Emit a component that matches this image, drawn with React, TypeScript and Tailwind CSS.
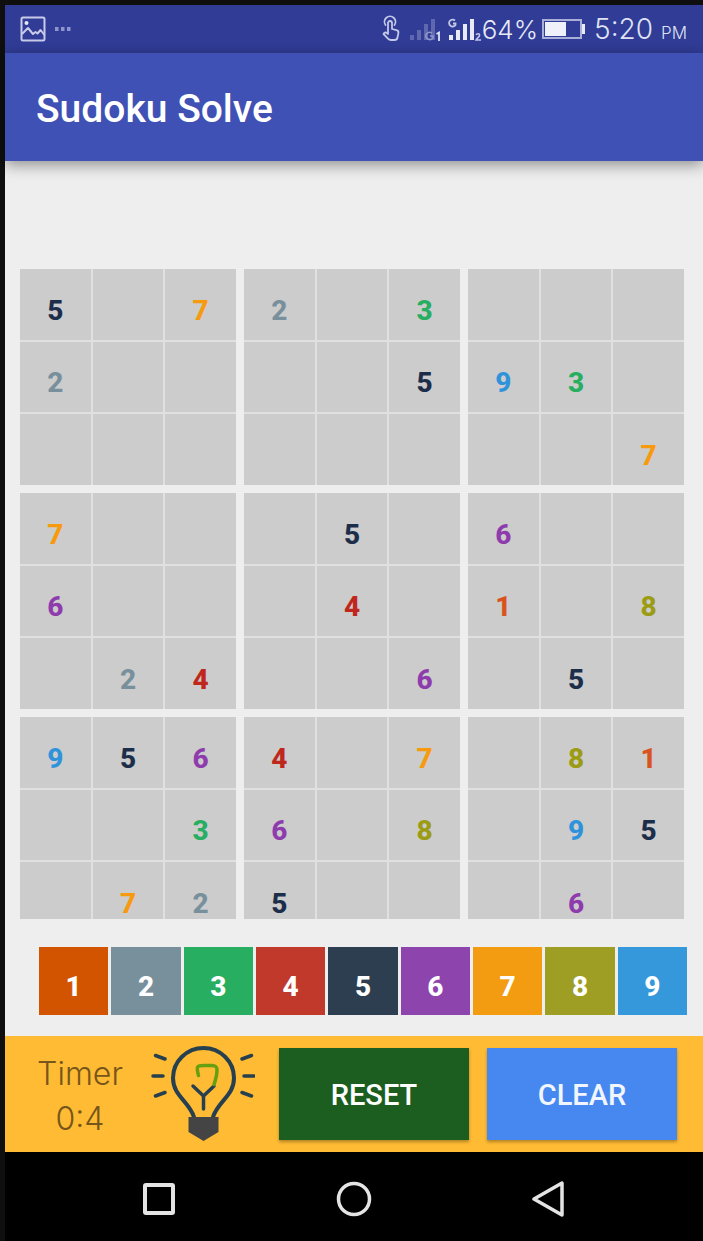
import { useState } from "react";

const START = [
  "507203000",
  "200005930",
  "000000007",
  "700050600",
  "600040108",
  "024006050",
  "956407081",
  "003608095",
  "072500060",
];

const INK = [
  "",
  "text-[#d9531e]",
  "text-[#78909c]",
  "text-[#27ae60]",
  "text-[#c0271c]",
  "text-[#1c2e4a]",
  "text-[#8e3bad]",
  "text-[#f79a0e]",
  "text-[#9c9c14]",
  "text-[#2f93dc]",
];

const FILL = [
  "",
  "bg-[#d35400]",
  "bg-[#78909c]",
  "bg-[#27ae60]",
  "bg-[#c0392b]",
  "bg-[#2c3e50]",
  "bg-[#8e44ad]",
  "bg-[#f39c12]",
  "bg-[#9e9d24]",
  "bg-[#3498db]",
];

const DIGITS = [1, 2, 3, 4, 5, 6, 7, 8, 9];
const THREE = [0, 1, 2];

function StatusBar() {
  return (
    <div className="flex h-12 items-center justify-between bg-[#303c96] pr-4 pl-[15px] text-[#dfe2f3]">
      <div className="flex items-center gap-2">
        <svg width="26" height="26" viewBox="0 0 26 26" fill="none" stroke="#c9cce8" strokeWidth="2" aria-hidden="true">
          <rect x="1.5" y="1.5" width="23" height="23" rx="1.5" />
          <path d="M2 18l6-6 5 6 2.500-2 2 1.500 3-3.500 4 5" strokeLinejoin="round" />
          <circle cx="6.500" cy="7" r="2" fill="#e6e8f6" stroke="none" />
        </svg>
        <svg width="18" height="4" viewBox="0 0 18 4" fill="#8f96cc" aria-hidden="true">
          <rect x="1" width="3.500" height="4" />
          <rect x="7" width="3.500" height="4" />
          <rect x="13" width="3.500" height="4" />
        </svg>
      </div>
      <div className="flex items-center">
        <svg width="100" height="28" viewBox="0 0 100 28" fill="none" aria-hidden="true">
          <g stroke="#c3c8e6" strokeWidth="1.800" strokeLinecap="round" strokeLinejoin="round">
            <path d="M3.500 10a5.500 5.500 0 1 1 9 0" />
            <path d="M6 17V8a2 2 0 0 1 4 0v6l4.500 1.200a2.500 2.500 0 0 1 1.900 2.900l-.9 4.400a3 3 0 0 1-3 2.500H9a4 4 0 0 1-3-1.400L1.500 19c.8-2 3-2 4.500 0z" />
          </g>
          <g fill="#5f68ae">
            <rect x="28" y="20" width="4" height="5" />
            <rect x="35" y="15" width="4" height="10" />
            <rect x="42" y="9" width="4" height="16" />
            <rect x="49" y="4" width="4" height="21" />
          </g>
          <path d="M50 18a4 3.500 0 1 0 1 5v-2h-3" stroke="#9097c9" strokeWidth="1.600" />
          <path d="M54.500 19l2.500-1.500V26" stroke="#dfe2f3" strokeWidth="1.800" />
          <g fill="#e8eaf6">
            <rect x="67" y="20" width="4" height="5" />
            <rect x="74" y="15" width="4" height="10" />
            <rect x="81" y="9" width="4" height="16" />
            <rect x="88" y="4" width="4" height="21" />
          </g>
          <path d="M73 5.500a3.500 3.500 0 1 0 .5 4.500V8.500H71" stroke="#c3c8e6" strokeWidth="1.800" />
          <path d="M94 20c1-2 4-1.500 3.500.5-.3 1.500-2.500 2.500-3.500 4.500h5" stroke="#c3c8e6" strokeWidth="1.500" />
        </svg>
        <span className="font-[Inter,sans-serif] text-[26px] font-light text-[#e8eaf6]">64%</span>
        <svg className="ml-1" width="44" height="20" viewBox="0 0 44 20" aria-hidden="true">
          <rect x="1" y="1" width="38" height="18" fill="none" stroke="#a9afd9" strokeWidth="2" />
          <rect x="3" y="3" width="21" height="14" fill="#eef0fa" />
          <rect x="40" y="5" width="3" height="10" fill="#e8eaf6" />
        </svg>
        <span className="ml-2 flex items-baseline gap-2 font-[Inter,sans-serif] text-[28px] font-light">
          5:20<span className="text-[17px]">PM</span>
        </span>
      </div>
    </div>
  );
}

function Bulb() {
  return (
    <svg width="104" height="96" viewBox="0 0 104 96" fill="none" strokeLinecap="round" strokeLinejoin="round" aria-hidden="true">
      <g stroke="#26404f" strokeWidth="4">
        <path d="M43 71C38 55 22 50 22 32a30.500 30 0 0 1 61 0C83 50 67 55 62 71" />
        <path d="M42 40L52.500 50V63M52.500 50L63 40" strokeWidth="3.500" />
        <path d="M4.500 9.500L14 13M2 30H12M4.500 50L14 46.500M91 13L100.500 9.500M93 30H103M91 46.500L100.500 50" strokeWidth="3.500" />
      </g>
      <path d="M47.500 29.500C45 20 46 19.500 53 19.500h8c4 0 5 1 5 5 0 6-1.500 9-3 14" stroke="#66a010" strokeWidth="3.500" />
      <path d="M37.500 71h30v15l-5 3-10 6-10-6-5-3z" fill="#444" />
    </svg>
  );
}

export default function App() {
  const [board, setBoard] = useState(START);
  const [picked, setPicked] = useState(0);

  const place = (r: number, c: number) => {
    if (!picked || START[r][c] !== "0") return;
    setBoard(board.map((row, i) => (i === r ? row.slice(0, c) + picked + row.slice(c + 1) : row)));
  };

  return (
    <div className="flex h-screen flex-col border-t-[5px] border-l-[5px] border-[#0f0f0f] bg-[#eee] font-[Roboto,sans-serif]">
      <StatusBar />
      <header className="z-10 flex h-27 items-center bg-[#3f51b5] px-[31px] shadow-[0_4px_14px_rgba(0,0,0,0.4)]">
        <h1 className="pt-1 text-[39px] leading-none font-medium text-white">Sudoku Solve</h1>
      </header>

      <main className="flex min-h-0 flex-1 flex-col pt-27">
        <div className="min-h-0 flex-1 overflow-hidden pr-[19px] pl-[15px]">
          <div className="grid grid-cols-3 gap-2">
            {THREE.map((br) =>
              THREE.map((bc) => (
                <div key={`${br}${bc}`} className="grid aspect-square grid-cols-3 grid-rows-3 gap-[2px] bg-[#e0e0e0]">
                  {THREE.map((r) =>
                    THREE.map((c) => {
                      const row = br * 3 + r;
                      const col = bc * 3 + c;
                      const n = Number(board[row][col]);
                      return (
                        <button
                          key={`${r}${c}`}
                          type="button"
                          aria-label={`Row ${row + 1}, column ${col + 1}${n ? `, ${n}` : ""}`}
                          onClick={() => place(row, col)}
                          className={`flex items-end justify-center bg-[#ccc] pb-[15px] text-[28px] leading-7 font-extrabold ${INK[n]}`}
                        >
                          {n || ""}
                        </button>
                      );
                    }),
                  )}
                </div>
              )),
            )}
          </div>
        </div>
        <div className="grid grid-cols-9 gap-[3px] pt-7 pr-4 pb-[21px] pl-[34px]">
          {DIGITS.map((n) => (
            <button
              key={n}
              type="button"
              onClick={() => setPicked(n)}
              className={`h-17 pt-3 text-[28px] leading-none font-extrabold text-white ${FILL[n]}`}
            >
              {n}
            </button>
          ))}
        </div>
      </main>

      <footer className="flex h-29 items-center bg-[#ffbb33] pr-[26px] pl-5">
        <div className="w-[110px] pt-1 text-center font-[Inter,sans-serif] text-[32px] leading-[45px] font-light text-[#76561a]">
          <div>Timer</div>
          <div>0:4</div>
        </div>
        <button type="button" aria-label="Hint" className="ml-3 flex w-[112px] justify-center">
          <Bulb />
        </button>
        <div className="ml-5 grid flex-1 grid-cols-2 gap-[18px] text-[29px] font-medium">
          <button
            type="button"
            onClick={() => setBoard(START)}
            className="h-23 bg-[#1b5e20] pt-1 text-white shadow-[0_2px_3px_rgba(0,0,0,0.3)]"
          >
            RESET
          </button>
          <button
            type="button"
            onClick={() => setPicked(0)}
            className="h-23 bg-[#4788f0] pt-1 text-[#f1f5fe] shadow-[0_2px_3px_rgba(0,0,0,0.3)]"
          >
            CLEAR
          </button>
        </div>
      </footer>

      <nav className="flex h-[89px] items-center justify-center gap-40 bg-black pt-1">
        <button type="button" aria-label="Recent apps">
          <svg width="34" height="34" viewBox="0 0 34 34" fill="none" stroke="#e4e4e4" strokeWidth="4" strokeLinejoin="round">
            <rect x="3" y="3" width="28" height="28" rx="1" />
          </svg>
        </button>
        <button type="button" aria-label="Home">
          <svg width="36" height="36" viewBox="0 0 36 36" fill="none" stroke="#e4e4e4" strokeWidth="3.500">
            <circle cx="18" cy="18" r="15.500" />
          </svg>
        </button>
        <button type="button" aria-label="Back">
          <svg width="34" height="38" viewBox="0 0 34 38" fill="none" stroke="#e4e4e4" strokeWidth="3.500" strokeLinejoin="round">
            <path d="M30 3V35L2 19z" />
          </svg>
        </button>
      </nav>
    </div>
  );
}
